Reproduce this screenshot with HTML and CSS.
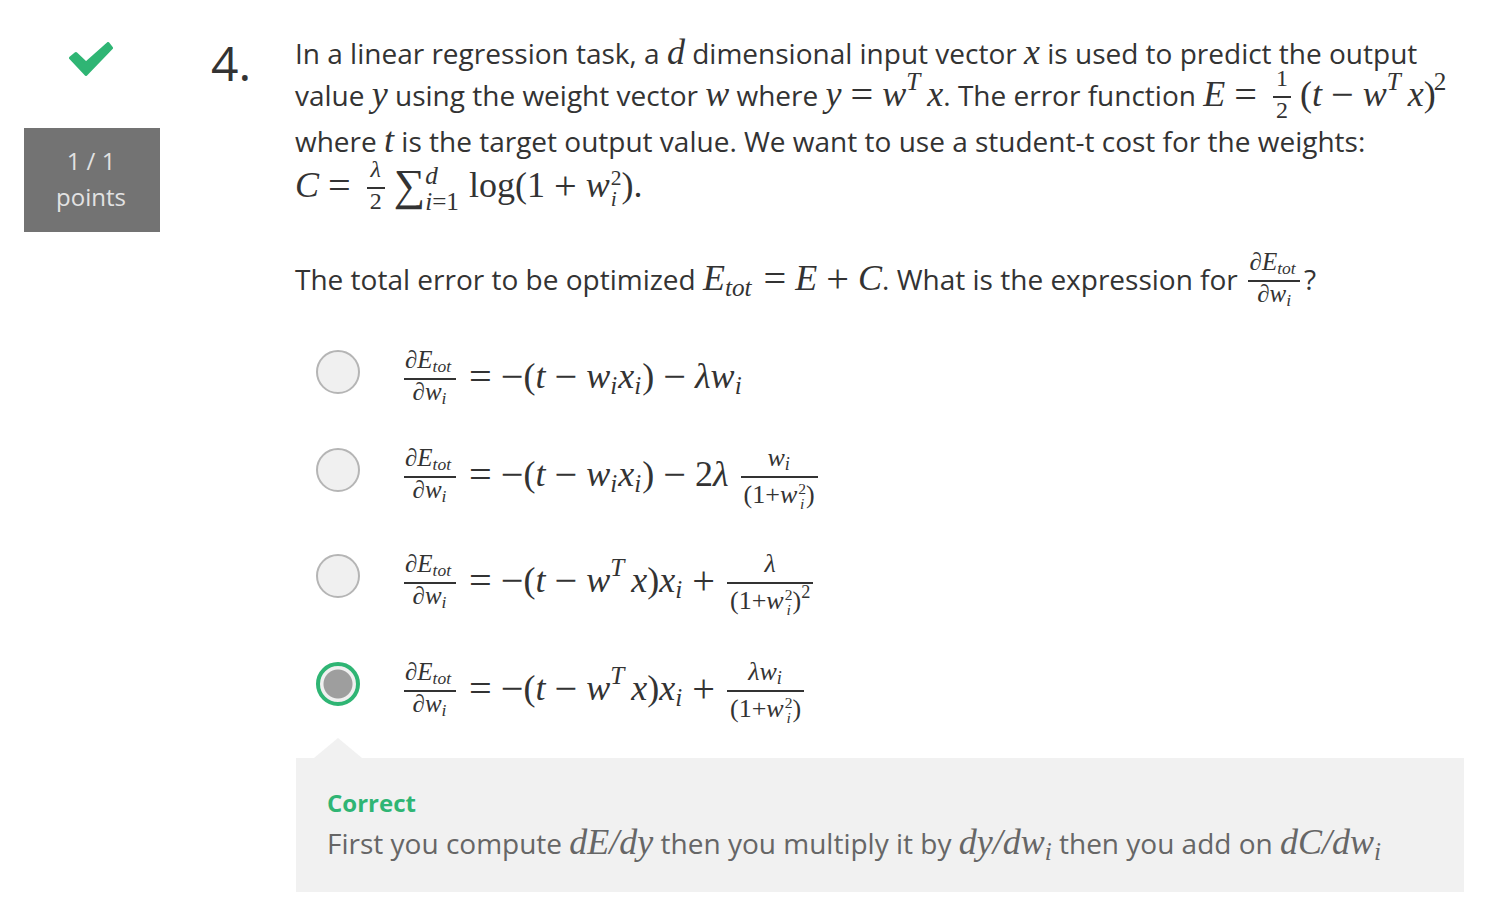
FILE: index.html
```html
<!DOCTYPE html>
<html lang="en">
<head>
  <meta charset="UTF-8">
  <meta name="viewport" content="width=device-width, initial-scale=1.0">
  <title>Quiz Question</title>
  <link rel="stylesheet" href="styles.css">
</head>
<body>
  <div class="question">
    <div class="score">
      <svg class="check" viewBox="0 0 44 34" width="44" height="34">
        <polygon points="7,11.5 17,21 39,1.5 42.5,6 17,32.5 1.5,16" fill="#2fb574" stroke="#2fb574" stroke-width="3" stroke-linejoin="round"/>
      </svg>
      <div class="points">1 / 1<br>points</div>
    </div>
    <div class="num">4.</div>
    <div class="content">
      <div class="line line-a">In a linear regression task, a <span class="m"><i>d</i></span> dimensional input vector <span class="m"><i>x</i></span> is used to predict the output</div>
      <div class="line line-b">value <span class="m"><i>y</i></span> using the weight vector <span class="m"><i>w</i></span> where <span class="m"><i>y</i><b>=</b><i>w</i><sup class="t"><i>T</i></sup><i>x</i></span>. The error function <span class="m"><i>E</i><b>=</b><span class="frac small"><span class="top">1</span><span class="bot">2</span></span> (<i>t</i><b>−</b><i>w</i><sup class="t"><i>T</i></sup><i>x</i>)<sup class="sq">2</sup></span></div>
      <div class="line line-c">where <span class="m"><i>t</i></span> is the target output value. We want to use a student-t cost for the weights:</div>
      <div class="line line-d"><span class="m"><i>C</i><b>=</b><span class="frac small"><span class="top"><i>λ</i></span><span class="bot">2</span></span> <span class="sum">∑</span><span class="limits limits-sum"><sup><i>d</i></sup><sub><i>i</i>=1</sub></span> log(1<b>+</b><i>w</i><span class="limits"><sup>2</sup><sub><i>i</i></sub></span>).</span></div>
      <div class="line line-e">The total error to be optimized <span class="m"><i class="etot">E<sub>tot</sub></i><b>=</b><i>E</i><b>+</b><i>C</i></span>. What is the expression for <span class="m"><span class="frac"><span class="top"><i>∂E<sub>tot</sub></i></span><span class="bot"><i>∂w<sub>i</sub></i></span></span></span>?</div>

      <div class="options">
        <div class="opt opt-1">
          <span class="radio"></span>
          <div class="answer m"><span class="frac"><span class="top"><i>∂E<sub>tot</sub></i></span><span class="bot"><i>∂w<sub>i</sub></i></span></span><b>=</b><span class="neg">−</span>(<i>t</i><b>−</b><i>w<sub>i</sub>x<sub>i</sub></i>)<b>−</b><i>λw<sub>i</sub></i></div>
        </div>
        <div class="opt opt-2">
          <span class="radio"></span>
          <div class="answer m"><span class="frac"><span class="top"><i>∂E<sub>tot</sub></i></span><span class="bot"><i>∂w<sub>i</sub></i></span></span><b>=</b><span class="neg">−</span>(<i>t</i><b>−</b><i>w<sub>i</sub>x<sub>i</sub></i>)<b>−</b>2<i>λ</i> <span class="frac frac-r"><span class="top"><i>w<sub>i</sub></i></span><span class="bot">(1+<i>w</i><span class="limits"><sup>2</sup><sub><i>i</i></sub></span>)</span></span></div>
        </div>
        <div class="opt opt-3">
          <span class="radio"></span>
          <div class="answer m"><span class="frac"><span class="top"><i>∂E<sub>tot</sub></i></span><span class="bot"><i>∂w<sub>i</sub></i></span></span><b>=</b><span class="neg">−</span>(<i>t</i><b>−</b><i>w</i><sup class="t"><i>T</i></sup><i>x</i>)<i>x<sub>i</sub></i><b>+</b><span class="frac frac-r"><span class="top"><i>λ</i></span><span class="bot">(1+<i>w</i><span class="limits"><sup>2</sup><sub><i>i</i></sub></span>)<sup>2</sup></span></span></div>
        </div>
        <div class="opt opt-4">
          <span class="radio radio-on"></span>
          <div class="answer m"><span class="frac"><span class="top"><i>∂E<sub>tot</sub></i></span><span class="bot"><i>∂w<sub>i</sub></i></span></span><b>=</b><span class="neg">−</span>(<i>t</i><b>−</b><i>w</i><sup class="t"><i>T</i></sup><i>x</i>)<i>x<sub>i</sub></i><b>+</b><span class="frac frac-r"><span class="top"><i>λw<sub>i</sub></i></span><span class="bot">(1+<i>w</i><span class="limits"><sup>2</sup><sub><i>i</i></sub></span>)</span></span></div>
        </div>
      </div>

      <div class="feedback">
        <div class="correct">Correct</div>
        <div class="explain">First you compute <span class="m"><i>dE/dy</i></span> then you multiply it by <span class="m"><i>dy/dw<sub>i</sub></i></span> then you add on <span class="m"><i>dC/dw<sub>i</sub></i></span></div>
      </div>
    </div>
  </div>
</body>
</html>
```

FILE: styles.css
```css
body {
  margin: 0;
  background-color: #fff;
  color: #333;
  font-family: "Open Sans", sans-serif;
  font-size: 28px;
}

.question {
  display: flex;
  padding: 33px 31px 0 24px;
}

.score {
  width: 136px;
  flex: none;
}

.check {
  display: block;
  margin: 9px 0 0 45px;
}

.points {
  margin-top: 52px;
  height: 104px;
  padding: 15px 2px 0 0;
  box-sizing: border-box;
  background-color: #737373;
  color: #e2e2e2;
  font-size: 24px;
  line-height: 36px;
  text-align: center;
}

.num {
  width: 84px;
  margin-left: 51px;
  flex: none;
  font-size: 48px;
  line-height: 60px;
}

.content {
  flex: 1;
  margin-top: -2px;
}

.line {
  white-space: nowrap;
}

.line-a { height: 42px; line-height: 42px; }
.line-b { height: 46px; line-height: 42px; }
.line-c { height: 45px; line-height: 42px; }
.line-d { height: 93px; line-height: 42px; }
.line-e { height: 93px; line-height: 42px; }

/* math */
.m {
  font-family: "Liberation Serif", serif;
  font-size: 36px;
  white-space: nowrap;
}

.m b,
.m .neg {
  font-weight: normal;
  font-size: 1.12em;
  line-height: 0;
  vertical-align: -2px;
}

.m b {
  margin: 0 9px;
}

.m sub,
.m sup {
  font-size: 0.7em;
  line-height: 0;
}

.m sub { vertical-align: -0.25em; }
.m sup { vertical-align: 0.62em; }
.m sup.t { margin-right: 7px; }
.m sup.sq { margin-left: -2px; }

.answer i sub { margin-right: 1px; }

.etot {
  margin-right: 3px;
}

.frac {
  display: inline-flex;
  flex-direction: column;
  align-items: center;
  vertical-align: middle;
  min-width: 52px;
  margin: -32px 4px -32px 0;
  font-size: 25px;
  text-align: center;
}

.line-e .frac {
  margin-left: 3px;
}

.frac .top,
.frac .bot {
  height: 32px;
  line-height: 24px;
  padding: 0 3px;
  box-sizing: border-box;
  white-space: nowrap;
}

.frac .top {
  align-self: stretch;
  padding: 0 3px 0 0;
  border-bottom: 2px solid #333;
}

.frac.small {
  min-width: 0;
  margin: -32px 0 -32px 7px;
  font-size: 24px;
}

.small .top {
  padding: 0 3px;
}

.frac.frac-r {
  min-width: 0;
  margin: -37px 0 -37px 3px;
  font-size: 26px;
}

.frac-r .top,
.frac-r .bot {
  height: 37px;
}

.frac-r .top {
  padding: 5px 3px 0;
}

.frac-r .bot {
  padding-top: 5px;
}

.sum {
  font-size: 44px;
  line-height: 0;
  vertical-align: -3px;
}

.limits {
  display: inline-flex;
  flex-direction: column;
  vertical-align: middle;
  margin: -1em 0 -1em 1px;
  font-size: 0.6em;
  line-height: 0.95em;
}

.limits sup,
.limits sub {
  font-size: 1em;
  height: 0.95em;
  line-height: 0.95em;
  vertical-align: baseline;
}

.limits-sum {
  margin: -26px 1px -26px 0;
  font-size: 0.7em;
}

.limits-sum sup,
.limits-sum sub {
  height: 26px;
  line-height: 26px;
}

.options {
  padding-left: 21px;
}

.opt {
  display: flex;
  gap: 44px;
}

.opt-1 { height: 98px; }
.opt-2 { height: 106px; }
.opt-3 { height: 108px; }
.opt-4 { height: 96px; }

.radio {
  width: 44px;
  height: 44px;
  flex: none;
  box-sizing: border-box;
  border: 2px solid #b5b5b5;
  border-radius: 50%;
  background-color: #f0f0f0;
}

.radio-on {
  border: 4px solid #2fb574;
  background: radial-gradient(circle, #9e9e9e 14px, #f0f0f0 15px);
}

.answer {
  height: 52px;
  line-height: 52px;
}

.feedback {
  position: relative;
  margin-left: 1px;
  height: 134px;
  padding: 27px 31px 0;
  box-sizing: border-box;
  background-color: #f1f1f1;
}

.feedback::before {
  content: "";
  position: absolute;
  top: -20px;
  left: 18px;
  border-left: 24px solid transparent;
  border-right: 24px solid transparent;
  border-bottom: 20px solid #f1f1f1;
}

.correct {
  color: #2fb574;
  font-size: 24px;
  font-weight: 700;
  line-height: 36px;
}

.explain {
  color: #666;
  line-height: 42px;
  white-space: nowrap;
}
```
